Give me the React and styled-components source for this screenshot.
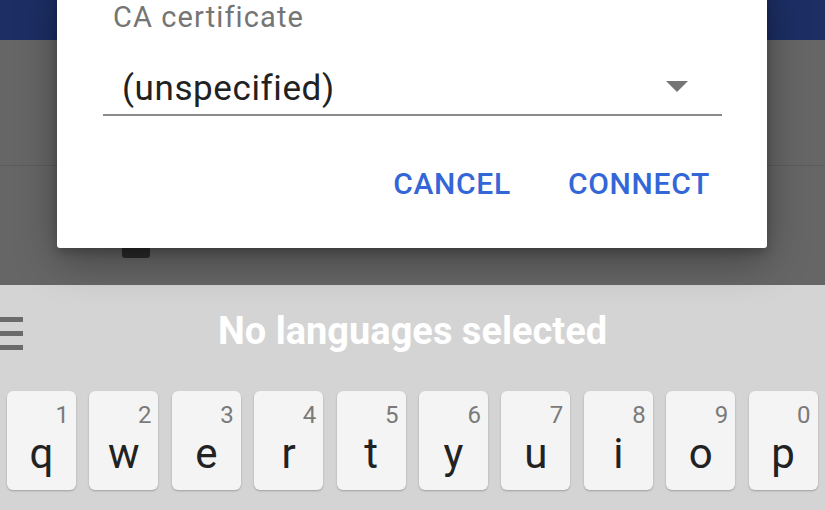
import React from 'react'
import styled, { createGlobalStyle } from 'styled-components'

const Global = createGlobalStyle`
  html, body {
    margin: 0;
    padding: 0;
    background: #d4d4d4;
  }
  body {
    font-family: Roboto, "Liberation Sans", sans-serif;
    overflow: hidden;
  }
`

const Page = styled.div`
  width: 825px;
  height: 510px;
  display: flex;
  flex-direction: column;
  overflow: hidden;
`

const Screen = styled.div`
  position: relative;
  height: 285px;
  display: flex;
  flex-direction: column;
  background: #666666;
`

const AppBar = styled.div`
  height: 40px;
  background: #1c2e64;
`

const ListArea = styled.div`
  flex: 1;
  display: flex;
  flex-direction: column;
`

const ListRow = styled.div`
  height: ${p => p.h}px;
  border-bottom: ${p => (p.divider ? '1px solid #5c5c5c' : 'none')};
  padding-left: 122px;
`

const Checkbox = styled.div`
  width: 28px;
  height: 11px;
  background: #2b2b2b;
  border-radius: 0 0 3px 3px;
`

const Dialog = styled.div`
  position: absolute;
  left: 57px;
  width: 710px;
  top: -20px;
  height: 268px;
  background: #fff;
  border-radius: 3px;
  box-shadow: 0 12px 40px rgba(0, 0, 0, 0.35), 0 4px 10px rgba(0, 0, 0, 0.2);
  box-sizing: border-box;
  padding: 20px 45px 0 46px;
  display: flex;
  flex-direction: column;
`

const Label = styled.div`
  font-size: 29px;
  line-height: 34px;
  color: #757575;
  padding-left: 10px;
  letter-spacing: 1.1px;
`

const Select = styled.div`
  margin-top: 25px;
  height: 57px;
  border-bottom: 2px solid #8a8a8a;
  display: flex;
  align-items: center;
  justify-content: space-between;
  padding: 0 34px 0 19px;
  box-sizing: border-box;
`

const SelectValue = styled.span`
  font-size: 35px;
  color: #212121;
  letter-spacing: 0.6px;
  margin-top: 4px;
`

const Caret = styled.div`
  width: 0;
  height: 0;
  border-left: 11px solid transparent;
  border-right: 11px solid transparent;
  border-top: 11px solid #757575;
`

const Actions = styled.div`
  display: flex;
  justify-content: flex-end;
  gap: 57px;
  margin-top: 50px;
  padding-right: 12px;
`

const ActionButton = styled.button`
  background: none;
  border: none;
  padding: 0;
  font-family: Roboto, "Liberation Sans", sans-serif;
  font-weight: 500;
  font-size: 30px;
  line-height: 36px;
  color: #3366d6;
  letter-spacing: 0.7px;
`

const Keyboard = styled.div`
  flex: 1;
  background: #d4d4d4;
  display: flex;
  flex-direction: column;
`

const Strip = styled.div`
  height: 106px;
  position: relative;
  display: flex;
  align-items: center;
  justify-content: center;
`

const Menu = styled.div`
  position: absolute;
  left: 0;
  top: 32px;
  width: 23px;
  display: flex;
  flex-direction: column;
  gap: 9px;
  span {
    height: 5px;
    background: #6b6b6b;
  }
`

const StripTitle = styled.div`
  font-size: 38px;
  font-weight: 700;
  color: #ffffff;
  margin-top: -14px;
`

const KeyRow = styled.div`
  display: grid;
  grid-template-columns: repeat(10, 69px);
  column-gap: 13.4px;
  padding: 0 7px;
`

const Key = styled.div`
  position: relative;
  height: 99px;
  background: #f4f4f4;
  border-radius: 6px;
  box-shadow: 0 1px 2px rgba(0, 0, 0, 0.25);
  display: flex;
  align-items: flex-end;
  justify-content: center;
`

const Letter = styled.span`
  font-size: 42px;
  line-height: 1;
  color: #222;
  margin-bottom: 15px;
`

const Hint = styled.span`
  position: absolute;
  top: 12px;
  right: 7px;
  font-size: 24px;
  line-height: 1;
  color: #7a7a7a;
`

const keys = [
  ['q', '1'], ['w', '2'], ['e', '3'], ['r', '4'], ['t', '5'],
  ['y', '6'], ['u', '7'], ['i', '8'], ['o', '9'], ['p', '0'],
]

export default function App() {
  return (
    <Page>
      <Global />
      <Screen>
        <AppBar />
        <ListArea>
          <ListRow h={125} divider />
          <ListRow h={81} />
          <ListRow h={11}>
            <Checkbox />
          </ListRow>
        </ListArea>
        <Dialog>
          <Label>CA certificate</Label>
          <Select>
            <SelectValue>(unspecified)</SelectValue>
            <Caret />
          </Select>
          <Actions>
            <ActionButton>CANCEL</ActionButton>
            <ActionButton>CONNECT</ActionButton>
          </Actions>
        </Dialog>
      </Screen>
      <Keyboard>
        <Strip>
          <Menu>
            <span />
            <span />
            <span />
          </Menu>
          <StripTitle>No languages selected</StripTitle>
        </Strip>
        <KeyRow>
          {keys.map(([l, n]) => (
            <Key key={l}>
              <Hint>{n}</Hint>
              <Letter>{l}</Letter>
            </Key>
          ))}
        </KeyRow>
      </Keyboard>
    </Page>
  )
}
